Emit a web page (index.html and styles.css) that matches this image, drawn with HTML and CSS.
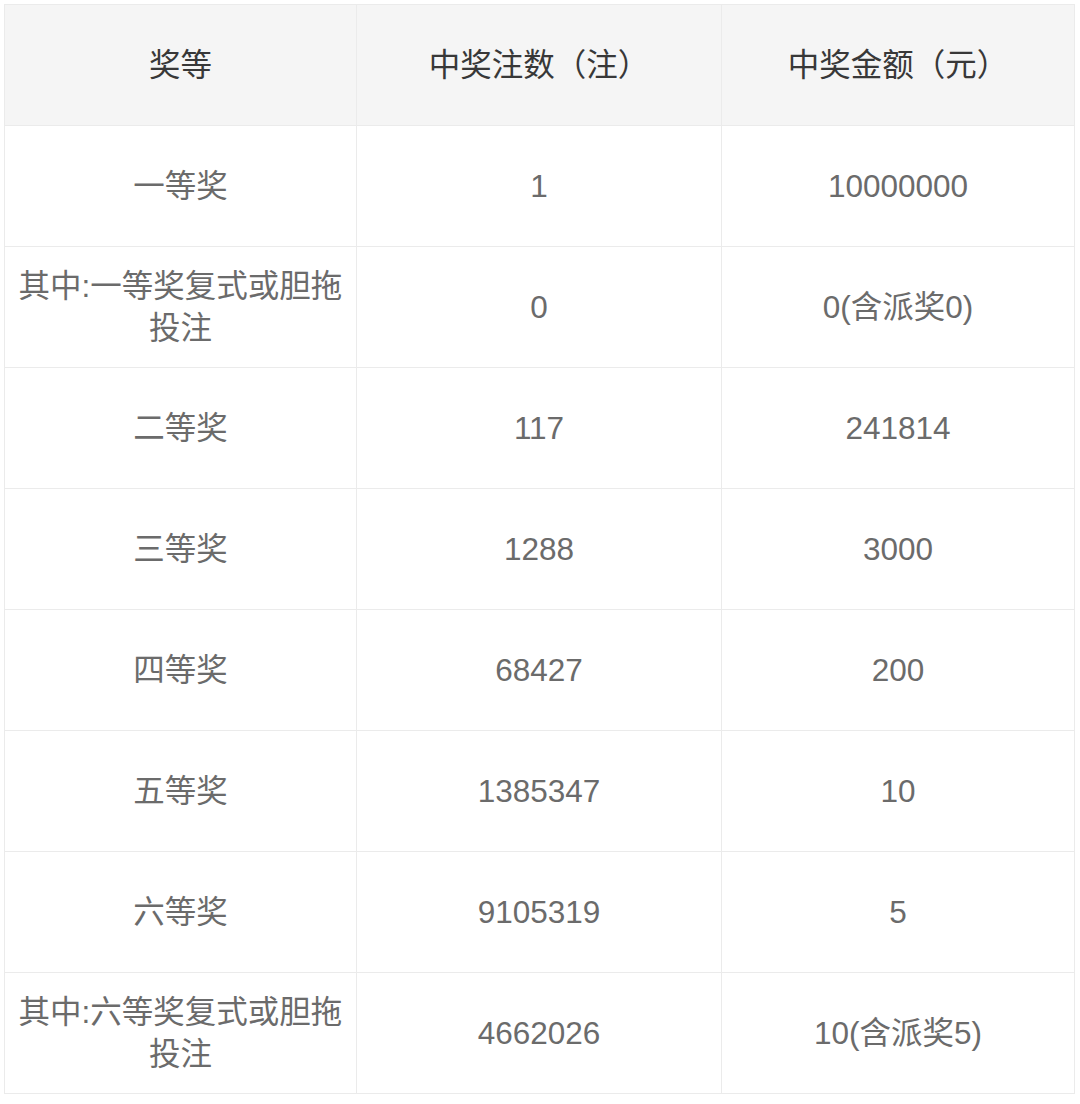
FILE: index.html
```html
<!DOCTYPE html>
<html lang="zh-CN">
<head>
<meta charset="utf-8">
<title>开奖详情</title>
<link rel="stylesheet" href="styles.css">
</head>
<body>
<div class="wrap">
<table class="prize">
  <colgroup>
    <col class="c1">
    <col class="c2">
    <col class="c3">
  </colgroup>
  <thead>
    <tr><th>奖等</th><th>中奖注数（注）</th><th>中奖金额（元）</th></tr>
  </thead>
  <tbody>
    <tr><td>一等奖</td><td>1</td><td>10000000</td></tr>
    <tr><td>其中:一等奖复式或胆拖投注</td><td>0</td><td>0(含派奖0)</td></tr>
    <tr><td>二等奖</td><td>117</td><td>241814</td></tr>
    <tr><td>三等奖</td><td>1288</td><td>3000</td></tr>
    <tr><td>四等奖</td><td>68427</td><td>200</td></tr>
    <tr><td>五等奖</td><td>1385347</td><td>10</td></tr>
    <tr><td>六等奖</td><td>9105319</td><td>5</td></tr>
    <tr><td>其中:六等奖复式或胆拖投注</td><td>4662026</td><td>10(含派奖5)</td></tr>
  </tbody>
</table>
</div>
</body>
</html>
```
FILE: styles.css
```css
html, body {
  margin: 0;
  padding: 0;
  background: #ffffff;
}
.wrap {
  padding: 4px 0 0 4px;
}
.prize {
  border-collapse: collapse;
  table-layout: fixed;
  width: 1070px;
  font-family: "Liberation Sans", "Noto Sans CJK SC", sans-serif;
  font-size: 31.5px;
  line-height: 42px;
  color: #6b6b6b;
}
.c1 { width: 352px; }
.c2 { width: 365px; }
.c3 { width: 353px; }
.prize th,
.prize td {
  border: 1px solid #ebebeb;
  height: 121px;
  padding: 0 10px;
  text-align: center;
  vertical-align: middle;
  box-sizing: border-box;
  font-weight: 400;
}
.prize th {
  background: #f5f5f5;
  color: #383838;
}
```
